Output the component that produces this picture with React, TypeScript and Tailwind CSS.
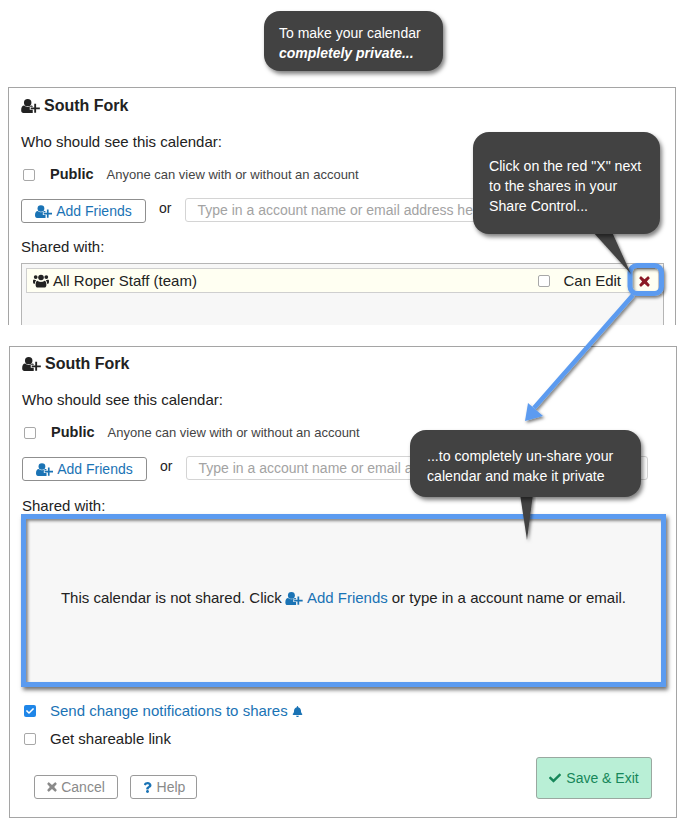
import React from "react";
import { FaQuestion, FaCheck, FaBell } from "react-icons/fa";

function UserPlus({ className = "" }: { className?: string }) {
  return (
    <svg viewBox="0 0 20 15" className={className} fill="currentColor" aria-hidden="true">
      <ellipse cx="7" cy="3.9" rx="4" ry="3.9" />
      <path d="M0 12C0 9 1.2 7 3.2 7C4.3 8 5.6 8.5 7 8.5C8.4 8.5 9.7 8 10.8 7C11.4 7 11.9 7.2 12.4 7.5V8.4H9.2V11.6H12.4V15H2.4C0.9 15 0 13.9 0 12Z" />
      <path d="M14 5.2H16V9H20V11H16V14.8H14V11H10.2V9H14Z" />
    </svg>
  );
}

function Users({ className = "" }: { className?: string }) {
  return (
    <svg viewBox="0 0 16 13" className={className} fill="currentColor" aria-hidden="true">
      <circle cx="8" cy="3" r="2.8" />
      <circle cx="2.7" cy="2.6" r="1.9" />
      <circle cx="13.3" cy="2.6" r="1.9" />
      <path d="M4.6 6.2C5.4 7 6.6 7.4 8 7.4C9.4 7.4 10.6 7 11.4 6.2C12.8 6.2 13.4 8 13.4 10.4C13.4 12 12.5 13 11.2 13H4.8C3.5 13 2.6 12 2.6 10.4C2.6 8 3.2 6.2 4.6 6.2Z" />
      <path d="M0 6.8C0 5.6 0.4 4.9 1 4.9C1.6 5.4 2.3 5.6 3.2 5.5C2.6 6.5 2 7.6 1.9 9.2H0.9C0.3 9.2 0 8.5 0 6.8Z" />
      <path d="M16 6.8C16 5.6 15.6 4.9 15 4.9C14.4 5.4 13.7 5.6 12.8 5.5C13.4 6.5 14 7.6 14.1 9.2H15.1C15.7 9.2 16 8.5 16 6.8Z" />
    </svg>
  );
}

function Cross({ className = "" }: { className?: string }) {
  return (
    <svg viewBox="0 0 12 12" className={className} fill="currentColor" aria-hidden="true">
      <path d="M2.6 0.6L6 3.6L9.4 0.6C9.7 0.3 10.1 0.3 10.4 0.6L11.5 1.8C11.8 2.1 11.8 2.5 11.5 2.8L8.6 6L11.5 9.2C11.8 9.5 11.8 9.9 11.5 10.2L10.4 11.4C10.1 11.7 9.7 11.7 9.4 11.4L6 8.4L2.6 11.4C2.3 11.7 1.9 11.7 1.6 11.4L0.5 10.2C0.2 9.9 0.2 9.5 0.5 9.2L3.4 6L0.5 2.8C0.2 2.5 0.2 2.1 0.5 1.8L1.6 0.6C1.9 0.3 2.3 0.3 2.6 0.6Z" />
    </svg>
  );
}

function Check({ checked = false }: { checked?: boolean }) {
  return checked ? (
    <span className="flex h-[12px] w-[12px] items-center justify-center rounded-[2px] bg-[#1f86e8]">
      <FaCheck className="text-[8px] text-white" />
    </span>
  ) : (
    <span className="block h-[12px] w-[12px] rounded-[2px] border border-[#a8a8a8] bg-white" />
  );
}

function AddFriendsRow() {
  return (
    <div className="flex h-[25px] items-start">
      <button className="flex h-[24px] w-[125px] items-center justify-center gap-[4px] rounded-[3px] border border-[#8f8f8f] bg-white text-[14px] text-[#1a73b5]">
        <UserPlus className="h-[13px] w-[17px]" />
        <span>Add Friends</span>
      </button>
      <span className="ml-[13px] text-[14px] leading-[18px] text-[#222]">or</span>
      <div className="ml-[14px] mt-[-1px] flex h-[24px] w-[462px] items-center overflow-hidden whitespace-nowrap rounded-[3px] border border-[#d4d4d4] bg-white pl-[11px] text-[14px] text-[#a3a3a3]">
        Type in a account name or email address here
      </div>
    </div>
  );
}

function Header() {
  return (
    <>
      <div className="flex h-[20px] items-center gap-[4px] text-[16px] font-bold text-[#222]">
        <UserPlus className="h-[14px] w-[19px]" />
        <span>South Fork</span>
      </div>
      <div className="mt-[16px] h-[20px] text-[15px] leading-[20px] text-[#222]">Who should see this calendar:</div>
      <div className="mt-[13px] flex h-[20px] items-center">
        <span className="ml-[2px]"><Check /></span>
        <span className="ml-[15px] text-[14.5px] font-bold text-[#222]">Public</span>
        <span className="ml-[13px] text-[13px] text-[#444]">Anyone can view with or without an account</span>
      </div>
    </>
  );
}

function Panel1() {
  return (
    <section className="ml-[8px] h-[238px] w-[668px] overflow-hidden border border-b-0 border-[#a5a5a5] bg-white pl-[12px] pt-[8px]">
      <Header />
      <div className="mt-[14px]"><AddFriendsRow /></div>
      <div className="mt-[13px] h-[20px] text-[15px] leading-[20px] text-[#222]">Shared with:</div>
      <div className="mt-[6px] h-[80px] w-[643px] border border-[#b5b5b5] bg-[#f7f7f7] px-[4px] pt-[4px]">
        <div className="flex h-[25px] items-center border border-[#cfcfcf] bg-[#fffff2] pl-[6px] pt-[1px] text-[15px] text-[#222]">
          <Users className="mr-[4px] h-[14px] w-[16px]" />
          <span>All Roper Staff (team)</span>
          <span className="ml-auto"><Check /></span>
          <span className="ml-[13px] mr-[18px]">Can Edit</span>
          <Cross className="mr-[8px] h-[11px] w-[11px] text-[#8b1a24]" />
        </div>
      </div>
    </section>
  );
}

function Panel2() {
  return (
    <section className="ml-[9px] mt-[21px] h-[472px] w-[668px] border border-[#a5a5a5] bg-white pl-[12px] pt-[7px]">
      <Header />
      <div className="mt-[14px]"><AddFriendsRow /></div>
      <div className="mt-[14px] h-[18px] text-[15px] leading-[20px] text-[#222]">Shared with:</div>
      <div className="ml-[-1px] flex h-[173px] w-[645px] items-center justify-center border-[5px] border-[#5b9bf0] bg-[#f7f7f7] pb-[4px] text-[15px] text-[#222] shadow-[2px_3px_4px_rgba(0,0,0,0.55),inset_2px_2px_3px_rgba(0,0,0,0.45)]">
        <span>This calendar is not shared. Click</span>
        <UserPlus className="ml-[3px] mr-[4px] h-[13px] w-[18px] text-[#1a73b5]" />
        <span className="text-[#1a73b5]">Add Friends</span>
        <span className="ml-[4px]">or type in a account name or email.</span>
      </div>
      <div className="mt-[14px] flex h-[20px] items-center">
        <span className="ml-[2px]"><Check checked /></span>
        <span className="ml-[14px] text-[15px] text-[#1a73b5]">Send change notifications to shares</span>
        <FaBell className="ml-[4px] text-[11px] text-[#1a73b5]" />
      </div>
      <div className="mt-[8px] flex h-[20px] items-center">
        <span className="ml-[2px]"><Check /></span>
        <span className="ml-[14px] text-[15px] text-[#222]">Get shareable link</span>
      </div>
      <div className="mt-[8px] flex items-end pl-[12px]">
        <button className="flex h-[24px] w-[84px] items-center justify-center gap-[4px] rounded-[3px] border border-[#9a9a9a] bg-white text-[14px] text-[#8a8a8a]">
          <Cross className="h-[10px] w-[10px]" />
          <span>Cancel</span>
        </button>
        <button className="ml-[12px] flex h-[24px] w-[67px] items-center justify-center gap-[4px] rounded-[3px] border border-[#9a9a9a] bg-white text-[14px] text-[#8a8a8a]">
          <FaQuestion className="text-[11px] text-[#1a73b5]" />
          <span>Help</span>
        </button>
        <button className="ml-[339px] flex h-[42px] w-[116px] items-center justify-center gap-[5px] rounded-[3px] border border-[#9aa8a0] bg-[#b9efd6] text-[14px] text-[#16875a]">
          <FaCheck className="text-[12px]" />
          <span>Save &amp; Exit</span>
        </button>
      </div>
    </section>
  );
}

function Annotations() {
  const tip = "absolute rounded-[16px] bg-[#424242] text-[14.15px] leading-[20px] text-white shadow-[2px_3px_4px_rgba(0,0,0,0.5)]";
  return (
    <>
      <div className="pointer-events-none absolute left-0 top-0 h-[829px] w-[686px]">
        <svg width="686" height="829" viewBox="0 0 686 829" className="absolute left-0 top-0">
          <defs>
            <filter id="s" x="-20%" y="-20%" width="140%" height="140%">
              <feDropShadow dx="1.5" dy="2" stdDeviation="1.5" floodColor="#000" floodOpacity="0.5" />
            </filter>
          </defs>
          <g filter="url(#s)">
            <rect x="630" y="265.5" width="31.5" height="28" rx="7" fill="none" stroke="#5b9bf0" strokeWidth="5" />
            <path d="M633 295 L534 408" stroke="#5b9bf0" strokeWidth="4.5" fill="none" />
            <path d="M525 421 L528 403 L543 416 Z" fill="#5b9bf0" />
          </g>
          <path d="M593 232 L612 232 L631 274 Z" fill="#424242" filter="url(#s)" />
          <path d="M520 494 L533 494 L527 540 Z" fill="#424242" filter="url(#s)" />
        </svg>
      </div>
      <div className={`${tip} left-[264px] top-[11px] h-[60px] w-[179px] pl-[15px] pt-[12px] text-[14px]`}>
        To make your calendar
        <br />
        <b><i>completely private...</i></b>
      </div>
      <div className={`${tip} left-[473px] top-[132px] h-[102px] w-[187px] pl-[16px] pt-[24px]`}>
        Click on the red "X" next
        <br />
        to the shares in your
        <br />
        Share Control...
      </div>
      <div className={`${tip} left-[410px] top-[430px] h-[67px] w-[231px] pl-[17px] pt-[16px]`}>
        ...to completely un-share your
        <br />
        calendar and make it private
      </div>
    </>
  );
}

export default function App() {
  return (
    <div className="relative h-[829px] w-[686px] overflow-hidden bg-white pt-[87px] font-['Liberation_Sans',Arial,sans-serif]">
      <Panel1 />
      <Panel2 />
      <Annotations />
    </div>
  );
}
